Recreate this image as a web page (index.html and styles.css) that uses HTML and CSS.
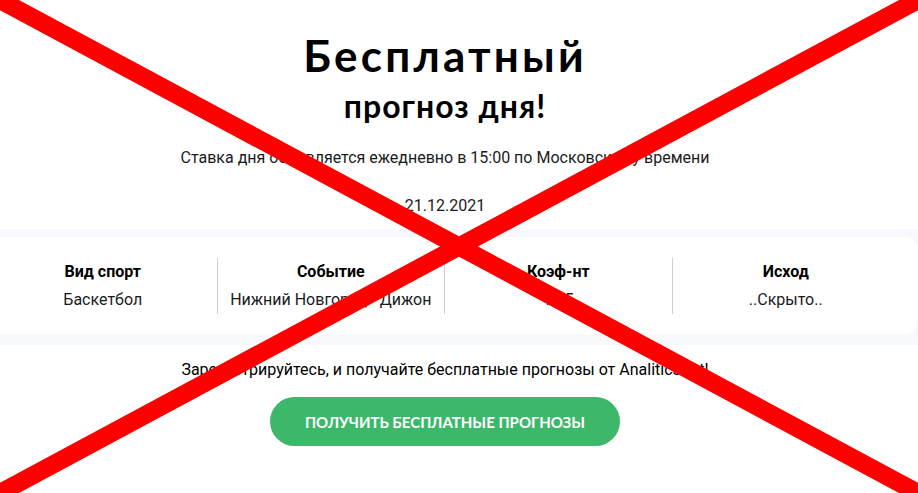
FILE: index.html
```html
<!DOCTYPE html>
<html lang="ru">
<head>
<meta charset="utf-8">
<title>Бесплатный прогноз дня</title>
<link rel="stylesheet" href="styles.css">
</head>
<body>
<main class="page">
  <section class="hero">
    <h1 class="title">Бесплатный</h1>
    <h2 class="subtitle">прогноз дня!</h2>
    <p class="note">Ставка дня обновляется ежедневно в 15:00 по Московскому времени</p>
    <p class="date">21.12.2021</p>
  </section>
  <section class="band">
    <div class="card">
      <div class="cell">
        <div class="cell-head">Вид спорт</div>
        <div class="cell-value">Баскетбол</div>
      </div>
      <div class="cell">
        <div class="cell-head">Событие</div>
        <div class="cell-value">Нижний Новгород - Дижон</div>
      </div>
      <div class="cell">
        <div class="cell-head">Коэф-нт</div>
        <div class="cell-value">1.85</div>
      </div>
      <div class="cell">
        <div class="cell-head">Исход</div>
        <div class="cell-value">..Скрыто..</div>
      </div>
    </div>
  </section>
  <section class="cta">
    <p class="cta-text">Зарегистрируйтесь, и получайте бесплатные прогнозы от AnaliticsBet!</p>
    <a class="cta-button" href="#">ПОЛУЧИТЬ БЕСПЛАТНЫЕ ПРОГНОЗЫ</a>
  </section>
</main>
<svg class="cross" viewBox="0 0 918 493" width="918" height="493" aria-hidden="true">
  <line x1="0" y1="0" x2="918" y2="493" stroke="#ff0000" stroke-width="18"/>
  <line x1="918" y1="0" x2="0" y2="493" stroke="#ff0000" stroke-width="18"/>
</svg>
</body>
</html>
```
FILE: styles.css
```css
html, body {
  margin: 0;
  padding: 0;
  background: #ffffff;
}
body {
  font-family: Roboto, "Liberation Sans", Arial, sans-serif;
  color: #1b1b1b;
  overflow: hidden;
  width: 918px;
  height: 493px;
  position: relative;
}
.page {
  display: flex;
  flex-direction: column;
}
.hero {
  display: flex;
  flex-direction: column;
  align-items: center;
  padding: 27px 28px 0 0;
}
.title {
  margin: 0;
  font-family: Lato, "Noto Sans", sans-serif;
  font-weight: 700;
  font-size: 44px;
  line-height: 56px;
  color: #000;
  letter-spacing: 3.2px;
}
.subtitle {
  margin: 3px 0 0;
  font-family: Lato, "Noto Sans", sans-serif;
  font-weight: 700;
  font-size: 32px;
  line-height: 40px;
  color: #000;
  letter-spacing: 1px;
}
.note {
  margin: 22px 0 0;
  font-size: 16px;
  line-height: 20px;
}
.date {
  margin: 28px 0 0;
  font-size: 16px;
  line-height: 20px;
}
.band {
  margin-top: 13px;
  background: #f8f9fd;
  padding: 8px 0 11px;
}
.card {
  margin-left: -11px;
  width: 928px;
  box-sizing: border-box;
  padding: 21px 18px 20px 0;
  background: #fff;
  border-radius: 0 12px 12px 0;
  display: grid;
  grid-template-columns: repeat(4, 1fr);
}
.cell {
  display: flex;
  flex-direction: column;
  align-items: center;
  border-left: 1px solid #d0d0d0;
}
.cell:first-child {
  border-left: none;
}
.cell-head {
  font-weight: 700;
  font-size: 16px;
  line-height: 28px;
  color: #000;
}
.cell-value {
  font-size: 16px;
  line-height: 28px;
}
.cta {
  display: flex;
  flex-direction: column;
  align-items: center;
  padding: 15px 28px 0 0;
}
.cta-text {
  margin: 0;
  font-size: 16px;
  line-height: 20px;
  color: #000;
}
.cta-button {
  margin-top: 17px;
  width: 350px;
  height: 49px;
  border-radius: 25px;
  background: #3db86b;
  color: #fff;
  text-decoration: none;
  display: flex;
  align-items: center;
  justify-content: center;
  font-family: Lato, "Noto Sans", sans-serif;
  font-weight: 700;
  font-size: 15px;
}
.cross {
  position: absolute;
  top: 0;
  left: 0;
  pointer-events: none;
}
```
